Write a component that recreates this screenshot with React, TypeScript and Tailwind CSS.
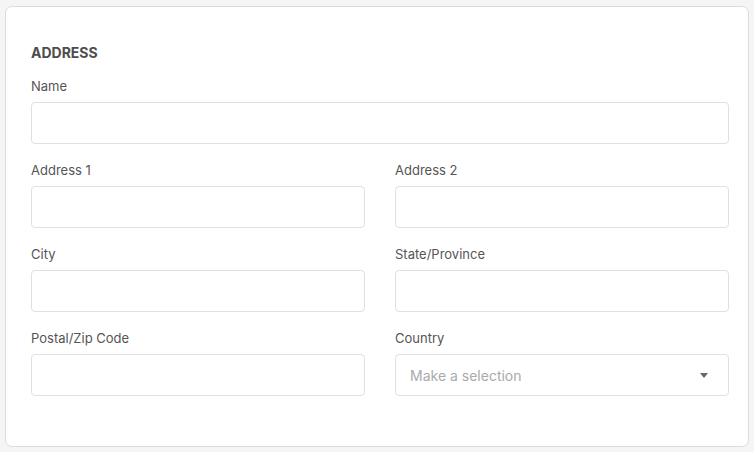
export default function App() {
  const field = "h-[42px] w-full rounded-[4px] border border-[#dfe0e6] bg-white px-[14px] text-[14px] outline-none";
  const label = "mb-[6px] block h-[20px] text-[13px] leading-[20px] text-[#555]";

  const Field = ({ name }: { name: string }) => (
    <div>
      <label className={label}>{name}</label>
      <input className={field} />
    </div>
  );

  return (
    <div className="min-h-screen bg-[#f5f5f5] pl-[5px] pr-[5px] pt-[6px] font-['Inter',sans-serif]">
      <div className="h-[441px] w-[744px] rounded-[7px] border border-[#dcdcdc] bg-white pb-[49px] pl-[25px] pr-[19px] pt-[36px]">
        <h2 className="h-[20px] text-[14px] font-bold leading-[20px] text-[#4d4d4d]">ADDRESS</h2>
        <div className="mt-[13px] flex flex-col gap-[16px]">
          <Field name="Name" />
          <div className="grid grid-cols-2 gap-x-[30px] gap-y-[16px]">
            <Field name="Address 1" />
            <Field name="Address 2" />
            <Field name="City" />
            <Field name="State/Province" />
            <Field name="Postal/Zip Code" />
            <div>
              <label className={label}>Country</label>
              <div className={`${field} flex items-center justify-between pr-[20px]`}>
                <span className="text-[#aaa]">Make a selection</span>
                <svg width="8" height="5" viewBox="0 0 8 5">
                  <path d="M0 0h8L4 5z" fill="#666" />
                </svg>
              </div>
            </div>
          </div>
        </div>
      </div>
    </div>
  );
}
